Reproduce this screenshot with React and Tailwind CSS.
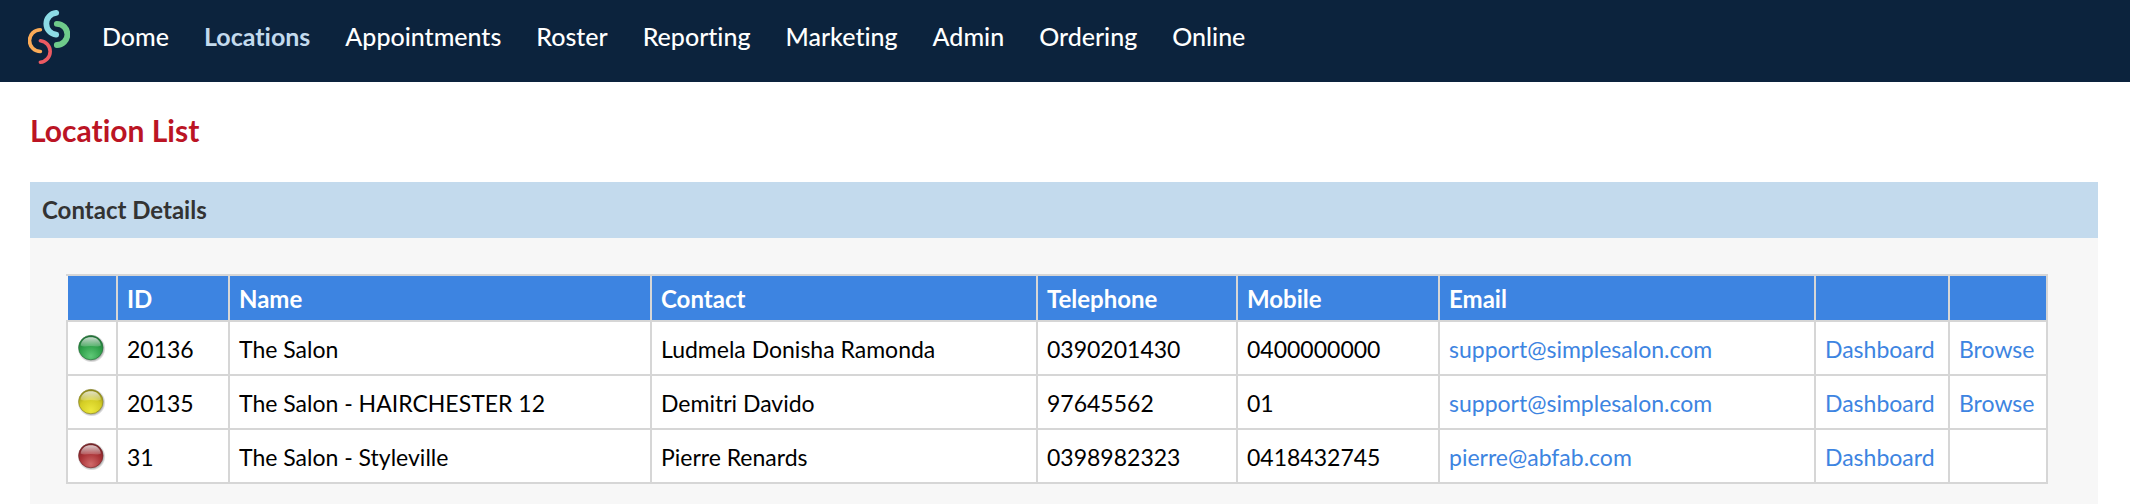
const NAV = ['Dome', 'Locations', 'Appointments', 'Roster', 'Reporting', 'Marketing', 'Admin', 'Ordering', 'Online'];

const ROWS = [
  { status: 'green', id: '20136', name: 'The Salon', contact: 'Ludmela Donisha Ramonda', telephone: '0390201430', mobile: '0400000000', email: 'support@simplesalon.com', browse: true },
  { status: 'yellow', id: '20135', name: 'The Salon - HAIRCHESTER 12', contact: 'Demitri Davido', telephone: '97645562', mobile: '01', email: 'support@simplesalon.com', browse: true },
  { status: 'red', id: '31', name: 'The Salon - Styleville', contact: 'Pierre Renards', telephone: '0398982323', mobile: '0418432745', email: 'pierre@abfab.com', browse: false },
];

const ORB = {
  green: { edge: '#1f6b34', mid: '#2fa04a', glow: '#5fc977' },
  yellow: { edge: '#85801a', mid: '#d3cc24', glow: '#ece83e' },
  red: { edge: '#6e2226', mid: '#a93236', glow: '#d06a6a' },
};

function Logo() {
  return (
    <svg className="h-[54px] w-[42px]" viewBox="0 0 42 54" fill="none" strokeLinecap="round" aria-hidden="true">
      <path d="M28.8 13.8A10.6 10.6 0 0 1 28.8 35" stroke="#6fcb8b" strokeWidth="5.8" />
      <path d="M28.2 2.9A10.9 10.9 0 0 0 28.2 24.6" stroke="#8cdbe6" strokeWidth="5.8" />
      <path d="M12.4 19.7A10.9 10.9 0 0 0 12.4 41.5" stroke="#fbab57" strokeWidth="3.6" />
      <path d="M12.4 30.7A10.8 10.8 0 0 1 12.4 52.2" stroke="#ec5a62" strokeWidth="3.6" />
    </svg>
  );
}

function Orb({ status }) {
  const c = ORB[status];
  return (
    <svg className="block size-7" viewBox="0 0 28 28" role="img" aria-label={status}>
      <defs>
        <radialGradient id={`body-${status}`} cx="0.5" cy="0.85" r="0.85">
          <stop offset="0" stopColor={c.glow} />
          <stop offset="0.55" stopColor={c.mid} />
          <stop offset="1" stopColor={c.edge} />
        </radialGradient>
        <linearGradient id={`shine-${status}`} x1="0" y1="0" x2="0" y2="1">
          <stop offset="0" stopColor="#fff" stopOpacity="0.75" />
          <stop offset="1" stopColor="#fff" stopOpacity="0.2" />
        </linearGradient>
        <radialGradient id={`shade-${status}`}>
          <stop offset="0.8" stopColor="#000" stopOpacity="0.35" />
          <stop offset="1" stopColor="#000" stopOpacity="0" />
        </radialGradient>
      </defs>
      <circle cx="13.6" cy="14.6" r="14" fill={`url(#shade-${status})`} />
      <circle cx="12.8" cy="13.6" r="12.2" fill={`url(#body-${status})`} stroke={c.edge} strokeOpacity="0.6" strokeWidth="1" />
      <path d="M2.6 11.5C3.6 5.8 7.6 3.2 12.8 3.2S22 5.8 23 11.5C20 13.2 16.8 12 12.8 12S5.6 13.2 2.6 11.5Z" fill={`url(#shine-${status})`} />
    </svg>
  );
}

const TH = 'border-2 border-[#d6d6d6] px-[9px] pt-px pb-0 text-left text-2xl leading-8 font-bold';
const TD = 'border-2 border-[#d6d6d6] px-[9px] pt-px pb-0 whitespace-nowrap';
const LINK = 'text-[#3d84e1] hover:underline';

export default function App() {
  return (
    <div className="bg-white font-['Lato',sans-serif] text-[23px] leading-8 text-black [font-variant-ligatures:none]">
      <header className="flex h-[82px] items-start bg-[#0c233d] pl-7">
        <a href="#home" aria-label="Home" className="mt-[10px] mr-8">
          <Logo />
        </a>
        <nav className="mt-5 flex gap-[35px] text-[25px] leading-8 font-medium whitespace-nowrap">
          {NAV.map((item) => (
            <a
              key={item}
              href={`#${item.toLowerCase()}`}
              aria-current={item === 'Locations' ? 'page' : undefined}
              className={item === 'Locations' ? 'font-bold text-[#c3daed]' : 'text-white'}
            >
              {item}
            </a>
          ))}
        </nav>
      </header>

      <main className="pr-8 pl-[30px]">
        <h1 className="pt-[30px] pb-[34px] text-[30px] leading-9 font-bold text-[#bb1424]">Location List</h1>
        <section className="bg-[#f7f7f7]">
          <h2 className="bg-[#c3daed] px-3 py-3 text-2xl leading-8 font-bold text-[#333333]">Contact Details</h2>
          <div className="pt-9 pr-[50px] pb-5 pl-9">
            <table className="w-full table-fixed border-collapse bg-white">
              <colgroup>
                <col className="w-[50px]" />
                <col className="w-[112px]" />
                <col className="w-[422px]" />
                <col className="w-[386px]" />
                <col className="w-[200px]" />
                <col className="w-[202px]" />
                <col className="w-[376px]" />
                <col className="w-[134px]" />
                <col className="w-[98px]" />
              </colgroup>
              <thead>
                <tr className="h-[46px] bg-[#3d84e1] text-white">
                  <th className="border-2 border-[#d6d6d6] border-l-[#f7f7f7]" aria-label="Status" />
                  <th className={TH}>ID</th>
                  <th className={TH}>Name</th>
                  <th className={TH}>Contact</th>
                  <th className={TH}>Telephone</th>
                  <th className={TH}>Mobile</th>
                  <th className={TH}>Email</th>
                  <th className={TH} aria-label="Dashboard" />
                  <th className={TH} aria-label="Browse" />
                </tr>
              </thead>
              <tbody>
                {ROWS.map((row) => (
                  <tr key={row.id} className="h-[54px]">
                    <td className="border-2 border-[#d6d6d6] py-0 pl-[10px]"><Orb status={row.status} /></td>
                    <td className={TD}>{row.id}</td>
                    <td className={TD}>{row.name}</td>
                    <td className={TD}>{row.contact}</td>
                    <td className={TD}>{row.telephone}</td>
                    <td className={TD}>{row.mobile}</td>
                    <td className={TD}><a className={LINK} href={`mailto:${row.email}`}>{row.email}</a></td>
                    <td className={TD}><a className={LINK} href={`#dashboard-${row.id}`}>Dashboard</a></td>
                    <td className={TD}>{row.browse && <a className={LINK} href={`#browse-${row.id}`}>Browse</a>}</td>
                  </tr>
                ))}
              </tbody>
            </table>
          </div>
        </section>
      </main>
    </div>
  );
}
